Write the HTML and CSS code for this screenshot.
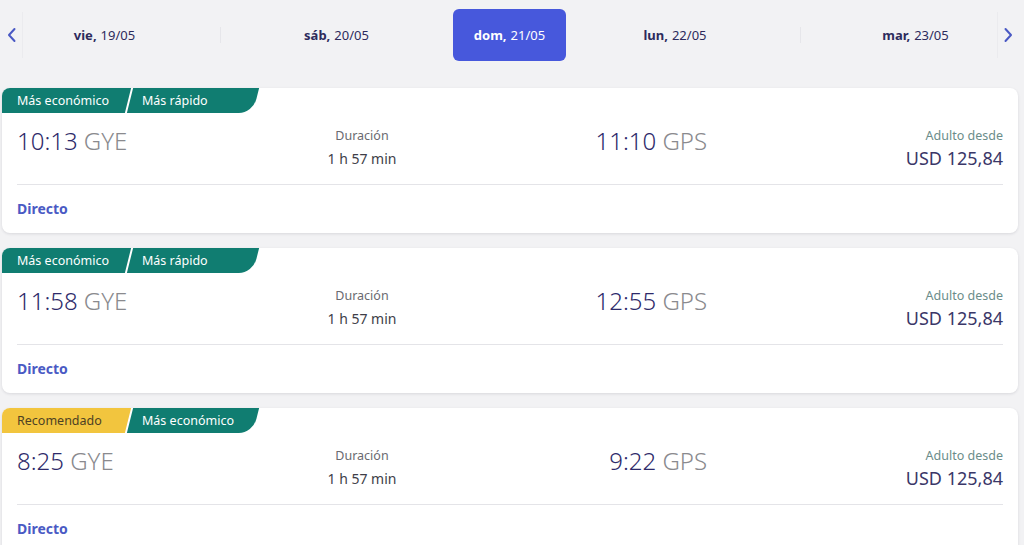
FILE: index.html
```html
<!DOCTYPE html>
<html lang="es">
<head>
<meta charset="utf-8">
<title>Vuelos</title>
<link rel="stylesheet" href="styles.css">
</head>
<body>
<div class="page">
  <div class="datebar">
    <button class="nav nav-prev" aria-label="Anterior">
      <svg width="10" height="16" viewBox="0 0 10 16"><path d="M7.5 2 L2 8 L7.5 14" fill="none" stroke="#4a59c4" stroke-width="2" stroke-linecap="round" stroke-linejoin="round"/></svg>
    </button>
    <div class="dates">
      <div class="date d1"><b>vie,</b> 19/05</div>
      <div class="date d2 sep"><b>sáb,</b> 20/05</div>
      <div class="date d3 active"><b>dom,</b> 21/05</div>
      <div class="date d4"><b>lun,</b> 22/05</div>
      <div class="date d5 sep"><b>mar,</b> 23/05</div>
    </div>
    <button class="nav nav-next" aria-label="Siguiente">
      <svg width="10" height="16" viewBox="0 0 10 16"><path d="M2.5 2 L8 8 L2.5 14" fill="none" stroke="#4a59c4" stroke-width="2" stroke-linecap="round" stroke-linejoin="round"/></svg>
    </button>
  </div>

  <div class="cards">
    <div class="card">
      <div class="tags">
        <span class="tag teal first">Más económico</span>
        <span class="tag teal last">Más rápido</span>
      </div>
      <div class="body">
        <div class="row">
          <div class="dep"><span class="time">10:13</span> <span class="code">GYE</span></div>
          <div class="dur"><div class="dur-label">Duración</div><div class="dur-val">1 h 57 min</div></div>
          <div class="arr"><span class="time">11:10</span> <span class="code">GPS</span></div>
          <div class="price"><div class="price-label">Adulto desde</div><div class="price-val">USD 125,84</div></div>
        </div>
        <div class="divider"></div>
        <div class="stops">Directo</div>
      </div>
    </div>

    <div class="card">
      <div class="tags">
        <span class="tag teal first">Más económico</span>
        <span class="tag teal last">Más rápido</span>
      </div>
      <div class="body">
        <div class="row">
          <div class="dep"><span class="time">11:58</span> <span class="code">GYE</span></div>
          <div class="dur"><div class="dur-label">Duración</div><div class="dur-val">1 h 57 min</div></div>
          <div class="arr"><span class="time">12:55</span> <span class="code">GPS</span></div>
          <div class="price"><div class="price-label">Adulto desde</div><div class="price-val">USD 125,84</div></div>
        </div>
        <div class="divider"></div>
        <div class="stops">Directo</div>
      </div>
    </div>

    <div class="card">
      <div class="tags">
        <span class="tag yellow first">Recomendado</span>
        <span class="tag teal last">Más económico</span>
      </div>
      <div class="body">
        <div class="row">
          <div class="dep"><span class="time">8:25</span> <span class="code">GYE</span></div>
          <div class="dur"><div class="dur-label">Duración</div><div class="dur-val">1 h 57 min</div></div>
          <div class="arr"><span class="time">9:22</span> <span class="code">GPS</span></div>
          <div class="price"><div class="price-label">Adulto desde</div><div class="price-val">USD 125,84</div></div>
        </div>
        <div class="divider"></div>
        <div class="stops">Directo</div>
      </div>
    </div>
  </div>
</div>
</body>
</html>
```

FILE: styles.css
```css
* { box-sizing: border-box; }

html, body {
  margin: 0;
  padding: 0;
  background: #f2f2f4;
  font-family: "Noto Sans", "Open Sans", sans-serif;
  overflow: hidden;
}

.page {
  width: 1016px;
  margin-left: 2px;
  padding-top: 9px;
}

/* Date bar */
.datebar {
  display: flex;
  align-items: center;
  height: 52px;
  position: relative;
}

.datebar::before {
  content: "";
  position: absolute;
  left: 0;
  right: 0;
  top: 3px;
  bottom: 3px;
  background: #fff;
  border-radius: 6px;
  z-index: -1;
}

.nav {
  width: 21px;
  height: 46px;
  border: none;
  background: transparent;
  padding: 0;
  display: flex;
  align-items: center;
  justify-content: center;
  cursor: pointer;
}

.nav-prev { border-right: 1px solid #ebebee; }
.nav-next { border-left: 1px solid #ebebee; }

.dates {
  flex: 1;
  display: grid;
  grid-template-columns: 197px 233px 113px 234px 1fr;
  height: 52px;
  align-items: center;
}

.date {
  height: 52px;
  display: flex;
  align-items: center;
  justify-content: center;
  font-size: 13px;
  color: #2d2b5c;
  position: relative;
  white-space: nowrap;
}

.date b { font-weight: 700; margin-right: 4px; }

.date.sep::before {
  content: "";
  position: absolute;
  left: 0;
  top: 18px;
  height: 16px;
  width: 1px;
  background: #e6e6ea;
}

.d1 { padding-right: 34px; }
.d4 { padding-right: 16px; }
.d5 { padding-left: 34px; }

.date.active {
  background: #4758dc;
  color: #fff;
  border-radius: 6px;
}

/* Cards */
.cards {
  margin-top: 27px;
  display: flex;
  flex-direction: column;
  gap: 15px;
}

.card {
  background: #fff;
  border-radius: 8px;
  box-shadow: 0 1px 3px rgba(30, 30, 60, 0.12);
  overflow: hidden;
  height: 145px;
  flex: none;
}

.tags {
  display: flex;
  height: 25px;
  gap: 2px;
}

.tag {
  position: relative;
  z-index: 0;
  width: 126px;
  height: 25px;
  line-height: 25px;
  font-size: 12.5px;
  color: #fff;
  white-space: nowrap;
}

.tag::before {
  content: "";
  position: absolute;
  top: 0;
  bottom: 0;
  left: 0;
  right: 0;
  transform: skewX(-14deg);
  z-index: -1;
}

.tag.first { padding-left: 15px; }
.tag.first::before { left: -20px; }
.tag.last { padding-left: 12px; }
.tag.last::before { border-bottom-right-radius: 14px; }

.tag.teal::before { background: #107d71; }
.tag.yellow { color: #4d4124; }
.tag.yellow::before { background: #f2c53e; }

.body {
  padding: 12px 15px 15px 15px;
}

.row {
  display: grid;
  grid-template-columns: 260px 170px 260px 1fr;
  height: 44px;
}

.time {
  font-size: 24px;
  font-weight: 300;
  color: #2e2a6a;
}

.code {
  font-size: 24px;
  font-weight: 300;
  color: #8a8a8e;
  margin-left: 2px;
}

.dep, .arr {
  line-height: 32px;
  white-space: nowrap;
}

.arr { text-align: right; }

.dur { text-align: center; }

.dur-label {
  font-size: 12.5px;
  line-height: 20px;
  margin-top: 1px;
  color: #6a6a70;
}

.dur-val {
  font-size: 14px;
  line-height: 24px;
  margin-top: 1px;
  color: #3e3e48;
}

.price { text-align: right; }

.price-label {
  font-size: 12.5px;
  line-height: 20px;
  margin-top: 1px;
  color: #6b8d8a;
}

.price-val {
  font-size: 18px;
  line-height: 24px;
  color: #3a3768;
}

.divider {
  margin-top: 15px;
  height: 1px;
  background: #e4e4e8;
}

.stops {
  padding-top: 14px;
  line-height: 20px;
  font-size: 14px;
  font-weight: 700;
  color: #4a5ac4;
}
```
